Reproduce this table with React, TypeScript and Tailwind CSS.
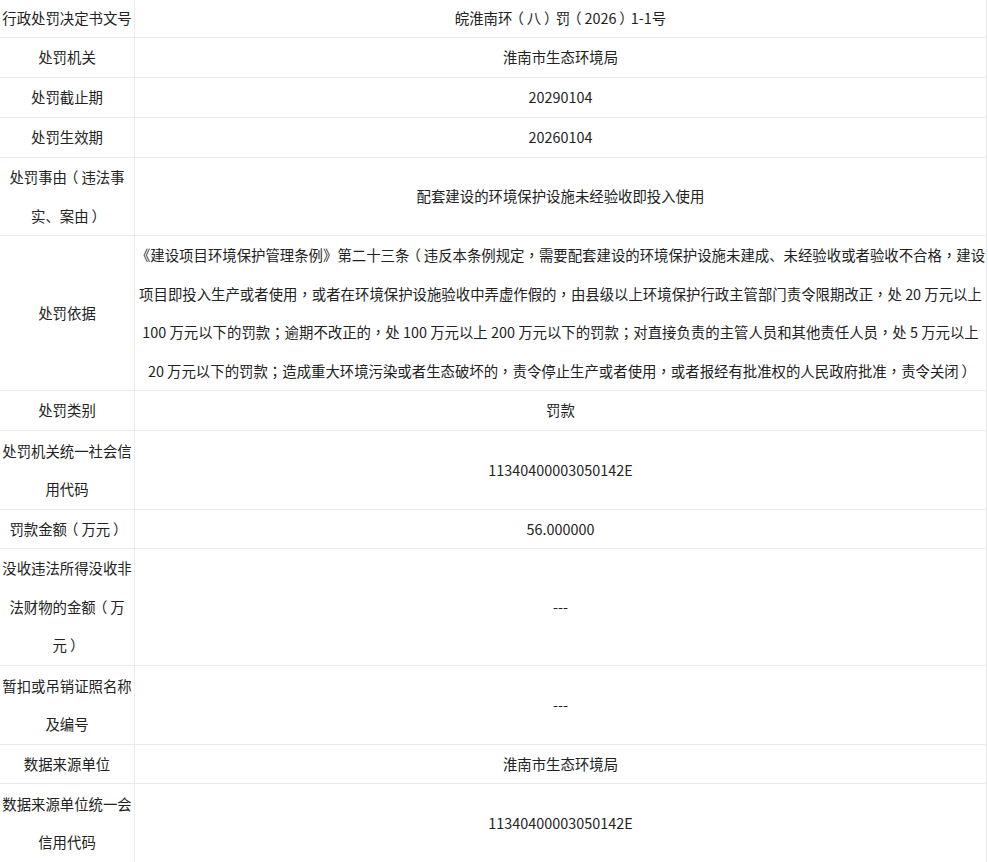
import React from "react";

type Row = { label: string[]; value: string[]; h: string };

const rows: Row[] = [
  { label: ["行政处罚决定书文号"], value: ["皖淮南环（八）罚（2026）1-1号"], h: "h-[38px]" },
  { label: ["处罚机关"], value: ["淮南市生态环境局"], h: "h-[40px]" },
  { label: ["处罚截止期"], value: ["20290104"], h: "h-[40px]" },
  { label: ["处罚生效期"], value: ["20260104"], h: "h-[40px]" },
  { label: ["处罚事由（违法事", "实、案由）"], value: ["配套建设的环境保护设施未经验收即投入使用"], h: "h-[78px]" },
  {
    label: ["处罚依据"],
    value: [
      "《建设项目环境保护管理条例》第二十三条（违反本条例规定，需要配套建设的环境保护设施未建成、未经验收或者验收不合格，建设",
      "项目即投入生产或者使用，或者在环境保护设施验收中弄虚作假的，由县级以上环境保护行政主管部门责令限期改正，处 20 万元以上",
      "100 万元以下的罚款；逾期不改正的，处 100 万元以上 200 万元以下的罚款；对直接负责的主管人员和其他责任人员，处 5 万元以上",
      "20 万元以下的罚款；造成重大环境污染或者生态破坏的，责令停止生产或者使用，或者报经有批准权的人民政府批准，责令关闭）",
    ],
    h: "h-[155px]",
  },
  { label: ["处罚类别"], value: ["罚款"], h: "h-[40px]" },
  { label: ["处罚机关统一社会信", "用代码"], value: ["11340400003050142E"], h: "h-[79px]" },
  { label: ["罚款金额（万元）"], value: ["56.000000"], h: "h-[39px]" },
  { label: ["没收违法所得没收非", "法财物的金额（万", "元）"], value: ["---"], h: "h-[117px]" },
  { label: ["暂扣或吊销证照名称", "及编号"], value: ["---"], h: "h-[79px]" },
  { label: ["数据来源单位"], value: ["淮南市生态环境局"], h: "h-[39px]" },
  { label: ["数据来源单位统一会", "信用代码"], value: ["11340400003050142E"], h: "h-[79px]" },
];

function Text({ s }: { s: string }) {
  const parts = s.split(/([（）；，])/);
  return (
    <>
      {parts.map((p, i) => {
        if (p === "（")
          return (
            <span key={i} className="relative left-[-0.2em]">
              {p}
            </span>
          );
        if (p === "）")
          return (
            <span key={i} className="relative left-[0.2em]">
              {p}
            </span>
          );
        if (p === "；" || p === "，")
          return (
            <span key={i} className="font-['Noto_Sans_CJK_TC',sans-serif]">
              {p}
            </span>
          );
        return <React.Fragment key={i}>{p}</React.Fragment>;
      })}
    </>
  );
}

function Lines({ lines }: { lines: string[] }) {
  return (
    <div className="text-center leading-[38.5px]">
      {lines.map((l, i) => (
        <div key={i} className="whitespace-pre">
          <Text s={l} />
        </div>
      ))}
    </div>
  );
}

export default function App() {
  return (
    <div className="w-[987px] bg-white text-[14.4px] text-[#222222] font-['Microsoft_YaHei','Noto_Sans_CJK_SC',sans-serif]">
      {rows.map((r, i) => (
        <div key={i} className={`flex border-b border-r border-[#ebebeb] ${r.h}`}>
          <div className="w-[135px] shrink-0 border-r border-[#ebebeb] flex items-center justify-center">
            <Lines lines={r.label} />
          </div>
          <div className="flex-1 flex items-center justify-center">
            <Lines lines={r.value} />
          </div>
        </div>
      ))}
    </div>
  );
}
